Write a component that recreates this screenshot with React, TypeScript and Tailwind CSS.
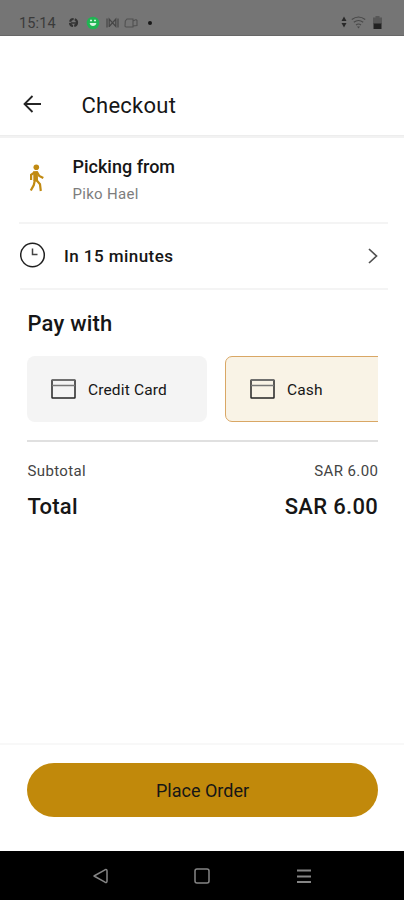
import React from "react";

function StatusBar() {
  return (
    <div className="flex h-9 shrink-0 items-end border-b border-[#676767] bg-[#757575] pb-[5px] pl-[19px] pr-[22px] text-[#3a3a3a]">
      <span className="mb-[-2px] w-[38px] whitespace-nowrap text-[14.5px] leading-[16px] tracking-[0.15px]">15:14</span>
      <svg className="ml-[11px] mb-[2px]" width="11" height="11" viewBox="0 0 11 11" fill="none" stroke="#333" strokeWidth="2.2">
        <circle cx="5.5" cy="5.5" r="3.5" strokeDasharray="4.6 1.2" />
        <path d="M3 6h5" strokeWidth="1.5" />
      </svg>
      <svg className="ml-[7px]" width="14" height="14" viewBox="0 0 14 14">
        <circle cx="7" cy="7" r="6.3" fill="#20b553" />
        <path d="M4 4.6h2M8 4.6h2" stroke="#d7f5e0" strokeWidth="1.5" />
        <path d="M3.6 7h6.8c-.5 4-6.3 4-6.8 0z" fill="#d7f5e0" />
      </svg>
      <svg className="ml-[6px] mb-[1px]" width="13" height="12" viewBox="0 0 13 12" fill="none" stroke="#464646" strokeWidth="1.2">
        <path d="M1 1.5v9M3.2 10V2l6.6 7.5V2L3.2 9.5M12 1.5v9" />
      </svg>
      <svg className="ml-[5px] mb-[2px]" width="14" height="10" viewBox="0 0 14 10" fill="none" stroke="#505050" strokeWidth="1.1">
        <path d="M1.3 3L3 1h6v8H2a1 1 0 0 1-1-1zM9 3l3-1.4 1 1v5L9 8" />
      </svg>
      <span className="mb-[5px] ml-[10px] size-[4px] rounded-full bg-[#181818]" />
      <span className="flex-1" />
      <svg className="mb-[2px]" width="6" height="12" viewBox="0 0 6 12" fill="#292929">
        <path d="M3 .5L5.5 5h-5zM.5 7h5L3 11.5z" />
      </svg>
      <svg className="ml-[4px] mb-[1px]" width="15" height="13" viewBox="0 0 15 13" fill="none" stroke="#484848" strokeWidth="1.1">
        <path d="M.8 3.5q6.7-5 13.4 0M2.8 6.3q4.7-3.5 9.4 0M5 9q2.5-2 5 0" />
        <path d="M6 10.5h3L7.5 12.4z" fill="#484848" stroke="none" />
      </svg>
      <svg className="ml-[7px] mb-[1px]" width="9" height="13" viewBox="0 0 9 13">
        <path d="M2.5 0h4v1.5H9V8H0V1.500h2.500z" fill="#575757" />
        <path d="M.5 7.500h8V13h-8z" fill="#222" />
      </svg>
    </div>
  );
}

function Header() {
  return (
    <header className="flex h-[99px] shrink-0 items-end pb-[15px] pl-[23px]">
      <svg className="mb-[7px]" width="19" height="18" viewBox="0 0 19 18" fill="none" stroke="#252525" strokeWidth="1.8">
        <path d="M18 9H1.500M9.500 1L1.500 9l8 8" />
      </svg>
      <h1 className="ml-[39.500px] text-[22px] font-[430] leading-[28px] tracking-[0.250px]">Checkout</h1>
    </header>
  );
}

function Walker() {
  return (
    <svg width="16" height="28" viewBox="0 0 16 28" fill="none" stroke="#c18a12" strokeWidth="2.200">
      <circle cx="8.300" cy="3.300" r="2.800" fill="#c18a12" stroke="none" />
      <path d="M5.200 7.300L9.800 7L10 17.500L5.400 17z" fill="#c18a12" stroke="none" />
      <path d="M6.500 8.300L3.100 10.800V16M9 8l2.300 4L15.300 14M7 15.500L5.800 21l-3 5.600M8 15.500l4 4.800.8 6.700" />
    </svg>
  );
}

function CardIcon() {
  return (
    <svg width="25" height="20" viewBox="0 0 25 20" fill="none" stroke="#252525" strokeWidth="1.500">
      <rect x="1" y="1" width="23" height="18" rx="0.500" />
      <path d="M1 1h23" stroke="#777" />
      <path d="M1 6.500h23" stroke="#777" strokeWidth="1.500" />
    </svg>
  );
}

export default function App() {
  return (
    <div className="flex h-[900px] w-[404px] flex-col overflow-hidden bg-white font-['Roboto',sans-serif] text-[#161616]">
      <StatusBar />
      <Header />
      <div className="h-[3px] shrink-0 border-t border-[#ededed] bg-[#f2f2f2]" />
      <main className="flex flex-1 flex-col">
        <section className="flex h-[84px] items-start pl-[28px] pt-[26px]">
          <Walker />
          <div className="ml-[28.500px] -mt-[9px]">
            <p className="text-[18px] font-medium leading-[24px]">Picking from</p>
            <p className="mt-[4px] text-[15px] leading-[22px] tracking-[0.300px] text-[#7d7d7d]">Piko Hael</p>
          </div>
        </section>
        <div className="ml-[19px] mr-[16px] h-[2px] bg-[#f4f4f4]" />
        <section className="flex h-[64px] items-center pl-[20px] pr-[26px]">
          <svg className="-mt-[2px]" width="26" height="26" viewBox="0 0 26 26" fill="none" stroke="#202020" strokeWidth="1.500">
            <circle cx="12.500" cy="13" r="11.800" />
            <path d="M12.500 6.500v6h5" stroke="#444" />
          </svg>
          <p className="ml-[18px] text-[17px] font-medium leading-[24px] tracking-[0.450px]">In 15 minutes</p>
          <svg className="ml-auto" width="10" height="16" viewBox="0 0 10 16" fill="none" stroke="#505050" strokeWidth="1.700">
            <path d="M1 1l7.500 7L1 15" />
          </svg>
        </section>
        <div className="ml-[20px] mr-[16px] h-[2px] bg-[#f4f4f4]" />
        <section className="ml-[27px] mr-[26px]">
          <h2 className="pl-[0.500px] pt-[19px] text-[22px] font-medium leading-[30px] tracking-[0.200px]">Pay with</h2>
          <div className="mt-[17px] flex gap-[18px] overflow-hidden">
            <button className="flex h-[66px] w-[180px] shrink-0 items-center rounded-[8px] bg-[#f4f4f4] pl-[24px]">
              <CardIcon />
              <span className="ml-[12px] mt-[3px] text-[15.500px] font-[450] tracking-[0.150px]">Credit Card</span>
            </button>
            <button className="flex h-[66px] w-[180px] shrink-0 items-center rounded-[7px] border border-[#d9a765] bg-[#f9f3e6] pl-[24px]">
              <CardIcon />
              <span className="ml-[12px] mt-[3px] text-[15.500px] font-[450] tracking-[0.150px]">Cash</span>
            </button>
          </div>
          <div className="mt-[18px] h-[2px] bg-[#e0e0e0]" />
          <div className="mt-[18px] flex justify-between pl-[0.500px] text-[15px] leading-[22px] text-[#444]">
            <span className="tracking-[0.350px]">Subtotal</span>
            <span className="-mr-[0.300px] tracking-[0.400px]">SAR 6.00</span>
          </div>
          <div className="mt-[10px] flex justify-between pl-[0.500px] text-[22px] font-medium leading-[30px]">
            <span className="tracking-[0.200px]">Total</span>
            <span className="tracking-[0.300px]">SAR 6.00</span>
          </div>
        </section>
      </main>
      <footer className="h-[108px] shrink-0 border-t-2 border-[#f8f8f8] px-[27px] pr-[26px] pt-[18px]">
        <button className="h-[54px] w-full rounded-full bg-[#c1890b] text-[18px] font-[450]">Place Order</button>
      </footer>
      <nav className="flex h-[49px] shrink-0 items-center bg-black pl-[92.500px] text-[#858585]">
        <svg width="16" height="16" viewBox="0 0 16 16" fill="none" stroke="currentColor" strokeWidth="1.500" strokeLinejoin="round">
          <path d="M1 8L12 1.800Q14 1 14 3v10q0 2-2 1.200z" />
        </svg>
        <svg className="ml-[85.500px]" width="16" height="16" viewBox="0 0 16 16" fill="none" stroke="currentColor" strokeWidth="1.500">
          <rect x="1" y="1" width="14" height="14" rx="2" />
        </svg>
        <svg className="ml-[86px]" width="16" height="16" viewBox="0 0 16 16" fill="none" stroke="currentColor" strokeWidth="1.800">
          <path d="M1 2.500h14M1 8.500h14M1 14h14" />
        </svg>
      </nav>
    </div>
  );
}
